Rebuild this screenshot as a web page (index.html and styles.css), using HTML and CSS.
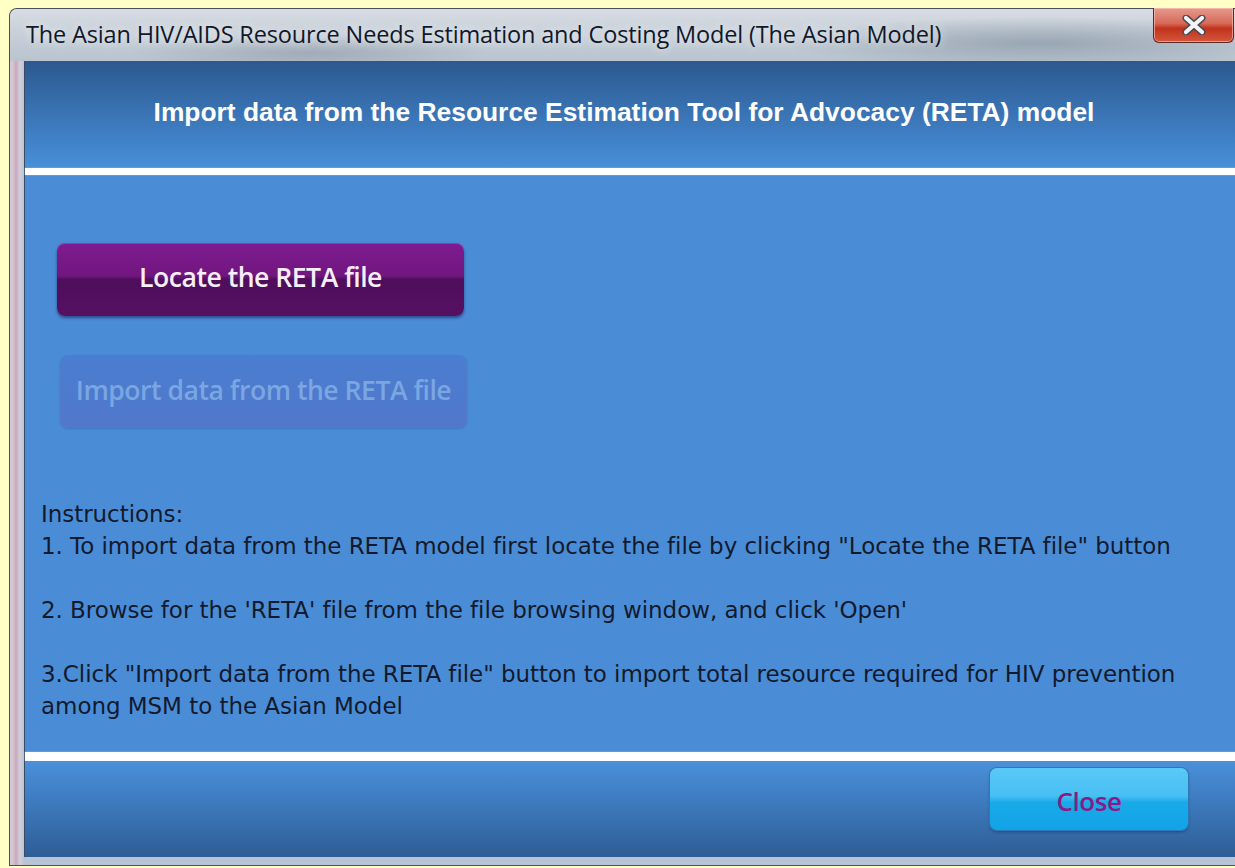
FILE: index.html
```html
<!DOCTYPE html>
<html lang="en">
<head>
<meta charset="utf-8">
<title>The Asian Model</title>
<link rel="stylesheet" href="styles.css">
</head>
<body>
<div class="window">
  <div class="titlebar">
    <span class="title">The Asian HIV/AIDS Resource Needs Estimation and Costing Model (The Asian Model)</span>
    <button class="win-close" aria-label="Close window">
      <svg width="28" height="20" viewBox="0 0 28 20">
        <path d="M6 3 L22 17 M22 3 L6 17" stroke="#4a4a55" stroke-width="7" stroke-linecap="round"/>
        <path d="M6 3 L22 17 M22 3 L6 17" stroke="#f4f4f6" stroke-width="4.2" stroke-linecap="round"/>
      </svg>
    </button>
  </div>
  <div class="client">
    <div class="header">Import data from the Resource Estimation Tool for Advocacy (RETA) model</div>
    <div class="rule"></div>
    <div class="content">
      <div class="actions">
        <button class="btn btn-locate">Locate the RETA file</button>
        <button class="btn btn-import" disabled>Import data from the RETA file</button>
      </div>
      <div class="instructions">
        <p>Instructions:<br>1. To import data from the RETA model first locate the file by clicking "Locate the RETA file" button</p>
        <p>2. Browse for the 'RETA' file from the file browsing window, and click 'Open'</p>
        <p>3.Click "Import data from the RETA file" button to import total resource required for HIV prevention among MSM to the Asian Model</p>
      </div>
    </div>
    <div class="rule rule-bottom"></div>
    <div class="footer">
      <button class="btn btn-close">Close</button>
    </div>
  </div>
</div>
</body>
</html>
```
FILE: styles.css
```css
html, body {
  margin: 0;
  height: 100%;
  overflow: hidden;
}

body {
  background: #ffffc6;
  padding: 8px 0 0 9px;
  box-sizing: border-box;
}

.window {
  position: relative;
  width: 1250px;
  box-sizing: border-box;
  border: 1px solid #4a4f58;
  border-right: none;
  border-radius: 8px 0 0 0;
  background:
    linear-gradient(90deg, #c9cfdb 0, #d8c4cf 3px, #c8a8bc 6px, #d3cfda 10px, #b7c4d6 14px, #b7c4d6 100%);
  padding: 0 0 8px 14px;
  display: flex;
  flex-direction: column;
}

.titlebar {
  height: 52px;
  flex: none;
  margin-left: -14px;
  padding-left: 16px;
  display: flex;
  align-items: center;
  border-radius: 7px 0 0 0;
  background:
    radial-gradient(ellipse 260px 26px at 1030px 34px, rgba(120,135,150,.55), transparent),
    radial-gradient(ellipse 180px 20px at 300px 44px, rgba(110,120,135,.35), transparent),
    linear-gradient(180deg, #d8dde3 0, #c9d1da 40%, #b9c4cf 100%);
}

.title {
  font-family: "Open Sans", "DejaVu Sans", sans-serif;
  font-size: 23.5px;
  color: #10182a;
  letter-spacing: -0.15px;
  margin-top: -2px;
  text-shadow: 0 0 8px rgba(255,255,255,.9);
}

.win-close {
  position: absolute;
  top: -1px;
  left: 1143px;
  width: 81px;
  height: 35px;
  padding: 0;
  border: 1px solid #5a2a24;
  border-top: none;
  border-radius: 0 0 6px 6px;
  background: linear-gradient(180deg, #e59a8e 0, #d86a58 45%, #c0321c 60%, #d5573d 100%);
  box-shadow: inset 0 0 0 1px rgba(255,200,190,.6);
  display: flex;
  align-items: center;
  justify-content: center;
}

.client {
  display: flex;
  flex-direction: column;
  background: #4a8dd6;
  border-left: 1px solid #3a4a62;
}

.header {
  height: 107px;
  flex: none;
  display: flex;
  align-items: center;
  justify-content: center;
  padding-right: 36px;
  padding-bottom: 4px;
  box-sizing: border-box;
  background: linear-gradient(180deg, #2c598f 0, #3a74b5 50%, #4890d9 100%);
  font-family: "Liberation Sans", Arial, sans-serif;
  font-weight: bold;
  font-size: 26.4px;
  color: #ffffff;
}

.rule {
  height: 7px;
  flex: none;
  background: #ffffff;
  box-shadow: 0 0 1px #bcd8f5;
}

.rule-bottom {
  height: 9px;
}

.content {
  height: 577px;
  box-sizing: border-box;
  flex: none;
  overflow: hidden;
  display: flex;
  flex-direction: column;
  padding: 68px 0 0 16px;
}

.actions {
  display: flex;
  flex-direction: column;
  align-items: flex-start;
  gap: 39px;
}

.btn {
  font-family: "Open Sans", "Noto Sans", sans-serif;
  font-weight: 600;
  border: none;
  padding: 0;
  cursor: pointer;
}

.btn-locate {
  margin-left: 16px;
  width: 407px;
  height: 73px;
  border-radius: 8px;
  font-size: 26.6px;
  letter-spacing: -0.5px;
  color: #f6eef8;
  background: linear-gradient(180deg, #7e1c90 0, #71167f 45%, #4e0e5b 50%, #561063 100%);
  box-shadow: 0 2px 3px rgba(20,20,80,.55), inset 0 1px 0 rgba(200,120,220,.35);
  padding-bottom: 6px;
}

.btn-import {
  margin-left: 19px;
  width: 407px;
  height: 73px;
  border-radius: 8px;
  font-size: 26.6px;
  letter-spacing: -0.5px;
  color: #7aa6e2;
  background: linear-gradient(180deg, #4a7ed0 0, #5277cb 100%);
  box-shadow: 0 1px 2px rgba(40,70,140,.3);
  padding-bottom: 4px;
  cursor: default;
}

.instructions {
  margin-top: 70px;
  font-family: "DejaVu Sans", sans-serif;
  font-size: 23px;
  line-height: 32px;
  color: #131a2e;
  letter-spacing: -0.05px;
}

.instructions p {
  margin: 0 0 32px;
  max-width: 1145px;
}

.instructions p:last-child {
  margin-bottom: 0;
}

.footer {
  height: 96px;
  box-sizing: border-box;
  flex: none;
  display: flex;
  align-items: flex-start;
  padding: 7px 0 0 965px;
  background: linear-gradient(180deg, #4a90da 0, #3e7cc0 40%, #2e5d95 100%);
}

.btn-close {
  width: 198px;
  height: 62px;
  border-radius: 7px;
  font-size: 26px;
  letter-spacing: -0.4px;
  color: #8a1a86;
  background:
    linear-gradient(180deg, #5ac9f6 0, #48bff3 45%, #1aaae9 55%, #10a3e6 100%);
  box-shadow: 0 0 0 1px #2f78b8, 0 2px 3px rgba(20,40,90,.5);
  padding-top: 4px;
}
```
